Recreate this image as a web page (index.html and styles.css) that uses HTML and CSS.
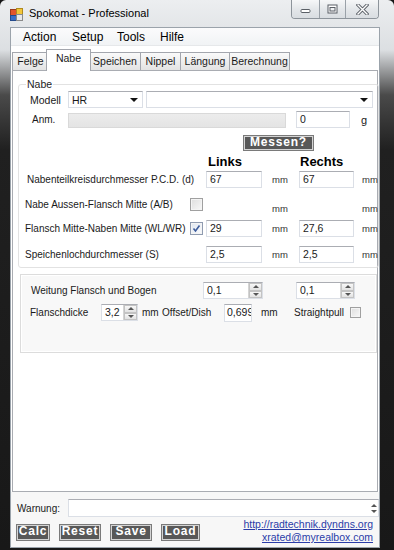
FILE: index.html
```html
<!DOCTYPE html>
<html>
    <head>
        <meta http-equiv="Content-Type" content="text/html; charset=utf-8" />
        <title>Spokomat - Professional</title>
        <link rel="stylesheet" href="styles.css">
    </head>
    <body>
        <div class="window">
            <div class="titlebar">
                <svg class="app_icon" width="13" height="13" viewBox="0 0 13 13">
                    <rect x="0.5" y="1.5" width="6" height="6" fill="#e2552c" stroke="#9b3a1c" stroke-width="1"/>
                    <rect x="6.5" y="0.5" width="6" height="6" fill="#f3c63a" stroke="#b08a1e" stroke-width="1"/>
                    <rect x="0.5" y="7.5" width="6" height="5" fill="#3c6fc6" stroke="#234a8c" stroke-width="1"/>
                    <rect x="6.5" y="6.5" width="6" height="6" fill="#e8e8e8" stroke="#8a8a8a" stroke-width="1"/>
                </svg>
                <span class="title">Spokomat - Professional</span>
                <div class="caption">
                    <span class="cb cb_min">
                        <svg width="11" height="6" viewBox="0 0 11 6"><rect x="1" y="1.5" width="9" height="3" rx="1" fill="#fff" stroke="#5a5f66"/></svg>
                    </span>
                    <span class="cb cb_max">
                        <svg width="11" height="10" viewBox="0 0 11 10"><rect x="1" y="1" width="9" height="8" fill="#fff" stroke="#5a5f66"/><rect x="3" y="3.5" width="5" height="3.5" fill="#eef0f2" stroke="#5a5f66"/></svg>
                    </span>
                    <span class="cb cb_close">
                        <svg width="13" height="11" viewBox="0 0 13 11"><path d="M2 1 L11 10 M11 1 L2 10" stroke="#5a5f66" stroke-width="3.2" stroke-linecap="square"/><path d="M2 1 L11 10 M11 1 L2 10" stroke="#fff" stroke-width="1.4" stroke-linecap="square"/></svg>
                    </span>
                </div>
            </div>

            <div class="client">
                <div class="menubar">
                    <span class="menu_item m_action">Action</span>
                    <span class="menu_item m_setup">Setup</span>
                    <span class="menu_item m_tools">Tools</span>
                    <span class="menu_item">Hilfe</span>
                </div>

                <div class="tabs">
                    <span class="tab t_felge">Felge</span>
                    <span class="tab tab_active t_nabe">Nabe</span>
                    <span class="tab t_speichen">Speichen</span>
                    <span class="tab t_nippel">Nippel</span>
                    <span class="tab t_laengung">Längung</span>
                    <span class="tab t_berechnung">Berechnung</span>
                </div>

                <div class="panel">
                    <fieldset class="group_nabe">
                        <legend>Nabe</legend>

                        <div class="row row_modell">
                            <span class="lbl lbl_modell">Modell</span>
                            <div class="combo combo_short"><span>HR</span><i class="arrow"></i></div>
                            <div class="combo combo_long"><span></span><i class="arrow"></i></div>
                        </div>

                        <div class="row row_anm">
                            <span class="lbl lbl_anm">Anm.</span>
                            <div class="disabled_box"></div>
                            <div class="textbox tb_gewicht">0</div>
                            <span class="unit_g">g</span>
                        </div>

                        <div class="row row_messen">
                            <span class="dark_btn btn_messen">Messen?</span>
                        </div>

                        <div class="grid grid_head">
                            <span></span><span></span>
                            <span class="head head_links">Links</span><span></span>
                            <span class="head head_rechts">Rechts</span><span></span>
                        </div>

                        <div class="grid grid_row1">
                            <span class="glbl glbl_first">Nabenteilkreisdurchmesser P.C.D. (d)</span>
                            <span></span>
                            <div class="textbox">67</div>
                            <span class="mm">mm</span>
                            <div class="textbox">67</div>
                            <span class="mm mm_r">mm</span>
                        </div>

                        <div class="grid grid_row2">
                            <span class="glbl">Nabe Aussen-Flansch Mitte (A/B)</span>
                            <span class="check"></span>
                            <span></span>
                            <span class="mm mm_low">mm</span>
                            <span></span>
                            <span class="mm mm_r mm_low">mm</span>
                        </div>

                        <div class="grid grid_row3">
                            <span class="glbl">Flansch Mitte-Naben Mitte (WL/WR)</span>
                            <span class="check check_on">
                                <svg width="11" height="11" viewBox="0 0 11 11"><path d="M2.5 5.5 L4.5 8 L8.5 2.5" fill="none" stroke="#3d5c9c" stroke-width="1.6"/></svg>
                            </span>
                            <div class="textbox">29</div>
                            <span class="mm">mm</span>
                            <div class="textbox">27,6</div>
                            <span class="mm mm_r">mm</span>
                        </div>

                        <div class="grid grid_row4">
                            <span class="glbl">Speichenlochdurchmesser (S)</span>
                            <span></span>
                            <div class="textbox">2,5</div>
                            <span class="mm">mm</span>
                            <div class="textbox">2,5</div>
                            <span class="mm mm_r">mm</span>
                        </div>
                    </fieldset>

                    <div class="group_weitung">
                        <div class="row row_weitung">
                            <span class="lbl lbl_weitung">Weitung Flansch und Bogen</span>
                            <div class="spin spin_links"><span class="spin_val">0,1</span><span class="spin_btns"><i class="up"></i><i class="down"></i></span></div>
                            <div class="spin spin_rechts"><span class="spin_val">0,1</span><span class="spin_btns"><i class="up"></i><i class="down"></i></span></div>
                        </div>
                        <div class="row row_flansch">
                            <span class="lbl lbl_flansch">Flanschdicke</span>
                            <div class="spin spin_dicke"><span class="spin_val">3,2</span><span class="spin_btns"><i class="up"></i><i class="down"></i></span></div>
                            <span class="lbl lbl_mm1">mm</span>
                            <span class="lbl lbl_offset">Offset/Dish</span>
                            <div class="textbox tb_offset">0,699</div>
                            <span class="lbl lbl_mm2">mm</span>
                            <span class="lbl lbl_straight">Straightpull</span>
                            <span class="check check_small"></span>
                        </div>
                    </div>
                </div>

                <div class="footer">
                    <div class="row row_warnung">
                        <span class="lbl lbl_warnung">Warnung:</span>
                        <div class="textbox tb_warnung">
                            <span class="scroll_arrows"><i class="up"></i><i class="down"></i></span>
                        </div>
                    </div>
                    <div class="row row_buttons">
                        <span class="dark_btn btn_calc">Calc</span>
                        <span class="dark_btn btn_reset">Reset</span>
                        <span class="dark_btn btn_save">Save</span>
                        <span class="dark_btn btn_load">Load</span>
                        <div class="links">
                            <a href="#">http://radtechnik.dyndns.org</a>
                            <a href="#">xrated@myrealbox.com</a>
                        </div>
                    </div>
                </div>
            </div>
        </div>
    </body>
</html>
```

FILE: styles.css
```css
* {
    box-sizing: border-box;
}
body {
    margin: 0;
    width: 394px;
    height: 550px;
    overflow: hidden;
    background: #151515;
    font-family: "Liberation Sans", Arial, sans-serif;
    font-size: 10px;
    color: #1a1a1a;
}

/* window frame */
.window {
    height: 550px;
    display: flex;
    flex-direction: column;
    padding: 0 14px 2px 10px;
    border-radius: 6px 6px 0 0;
    background: linear-gradient(to bottom, #eceef0 0, #dcdfe2 50px, #4a4a4a 95px, #202020 150px, #181818 100%);
}
.titlebar {
    height: 27px;
    display: flex;
    align-items: flex-start;
}
.app_icon {
    margin-top: 8px;
}
.title {
    margin: 6px 0 0 6px;
    font-size: 11px;
    line-height: 14px;
    color: #000;
}
.caption {
    margin-left: auto;
    margin-right: 1px;
    display: flex;
    height: 19px;
    border: 1px solid #8d949b;
    border-top: none;
    border-radius: 0 0 4px 4px;
    overflow: hidden;
}
.cb {
    height: 18px;
    display: flex;
    align-items: center;
    justify-content: center;
    background: linear-gradient(#f6f7f8, #e4e7ea 50%, #d9dde1);
    border-left: 1px solid #9aa1a8;
}
.cb_min {
    width: 27px;
    border-left: none;
    padding-top: 4px;
}
.cb_max {
    width: 26px;
}
.cb_close {
    width: 33px;
}

/* client area */
.client {
    flex: 1;
    display: flex;
    flex-direction: column;
    background: #fff;
    border: 1px solid #9ba3ab;
}
.menubar {
    height: 18px;
    display: flex;
    align-items: center;
    padding-left: 12px;
    font-size: 12px;
    color: #000;
    background: linear-gradient(#fbfbfc, #f1f3f5);
    border-bottom: 1px solid #e6e8ea;
}
.menu_item {
    display: inline-block;
}
.m_action { width: 49px; }
.m_setup { width: 45px; }
.m_tools { width: 43px; }

/* tabs */
.tabs {
    height: 24px;
    display: flex;
    align-items: flex-end;
    padding-left: 1px;
    font-size: 10.5px;
}
.tab {
    height: 18px;
    line-height: 17px;
    text-align: center;
    border: 1px solid #a3a6ad;
    border-bottom: none;
    margin-right: -1px;
    background: linear-gradient(#fafafa, #eeeeee 50%, #e3e3e3);
}
.tab_active {
    position: relative;
    z-index: 1;
    height: 22px;
    line-height: 17px;
    margin: 0 -2px -1px -2px;
    background: #fff;
}
.t_felge { width: 37px; }
.t_nabe { width: 45px; }
.t_speichen { width: 52px; }
.t_nippel { width: 41px; }
.t_laengung { width: 50px; }
.t_berechnung { width: 61px; }

.panel {
    margin-left: 1px;
    width: 366px;
    height: 422px;
    border: 1px solid #a9acb2;
    background: #fff;
}

/* group Nabe */
.group_nabe {
    margin: 7px 0 0 5px;
    width: 357px;
    padding: 0 0 4px 0;
    border: 1px solid #e2e2e2;
    border-radius: 3px;
}
.group_nabe legend {
    margin-left: 7px;
    padding: 0 1px;
    line-height: 13px;
    font-size: 10.5px;
    color: #222;
}
.row {
    display: flex;
    align-items: center;
    height: 17px;
}
.lbl {
    white-space: nowrap;
}
.lbl_modell {
    width: 49px;
    padding-left: 11px;
    font-size: 10.5px;
}
.lbl_anm {
    width: 49px;
    padding-left: 13px;
}
.row_anm {
    margin-top: 3px;
}
.row_messen {
    margin-top: 7px;
    height: 16px;
}

/* inputs */
.textbox {
    height: 17px;
    line-height: 15px;
    padding-left: 3px;
    font-size: 10.5px;
    background: #fff;
    border: 1px solid #dbdfe6;
    border-top-color: #abadb3;
    white-space: nowrap;
    overflow: hidden;
}
.combo {
    height: 17px;
    display: flex;
    align-items: center;
    justify-content: space-between;
    padding: 0 4px 0 3px;
    font-size: 10.5px;
    background: #fff;
    border: 1px solid #dbdfe6;
    border-top-color: #abadb3;
}
.combo_short {
    width: 75px;
}
.combo_long {
    width: 227px;
    margin-left: 3px;
}
.arrow {
    width: 0;
    height: 0;
    border-left: 4px solid transparent;
    border-right: 4px solid transparent;
    border-top: 4px solid #111;
}
.disabled_box {
    width: 218px;
    height: 15px;
    margin-top: 2px;
    background: linear-gradient(#ececec, #e4e4e4);
    border: 1px solid #d9d9d9;
}
.tb_gewicht {
    width: 54px;
    margin-left: 10px;
}
.unit_g {
    margin-left: 11px;
    font-size: 11px;
}

.dark_btn {
    display: inline-block;
    height: 16px;
    line-height: 13px;
    text-align: center;
    color: #fff;
    font-weight: bold;
    font-size: 12px;
    letter-spacing: 0.8px;
    background: #585858;
    border: 1px solid #7a7a7a;
    box-shadow: inset 0 0 0 1px #d4d4d4;
}
.btn_messen {
    margin-left: 224px;
    width: 71px;
}

/* measurement grid */
.grid {
    display: grid;
    grid-template-columns: 171px 16px 56px 37px 55px auto;
    align-items: center;
    height: 17px;
}
.grid_head {
    margin-top: 3px;
    height: 14px;
}
.head {
    font-weight: bold;
    font-size: 13px;
    color: #000;
}
.head_links {
    padding-left: 2px;
}
.head_rechts {
    padding-left: 1px;
}
.grid_row1 {
    margin-top: 3px;
}
.grid_row2 {
    margin-top: 7px;
}
.grid_row3 {
    margin-top: 8px;
}
.grid_row4 {
    margin-top: 9px;
}
.glbl {
    padding-left: 6px;
    white-space: nowrap;
}
.glbl_first {
    padding-left: 8px;
}
.mm {
    padding-left: 10px;
    font-size: 9.5px;
    color: #333;
}
.mm_r {
    padding-left: 8px;
}
.mm_low {
    padding-top: 8px;
}
.check {
    width: 13px;
    height: 13px;
    display: flex;
    align-items: center;
    justify-content: center;
    border: 1px solid #a0a0a0;
    background: linear-gradient(135deg, #dedede, #f8f8f8);
    box-shadow: inset 0 0 0 1px #f4f4f4;
}
.check_on {
    border-color: #8f9bb0;
    background: linear-gradient(135deg, #dfe6f0, #fafbfd);
}

/* group Weitung */
.group_weitung {
    margin: 6px 0 0 7px;
    width: 357px;
    height: 79px;
    padding: 7px 0 0 0;
    border: 1px solid #dcdcdc;
    background: #f8f8f8;
    box-shadow: inset 0 0 0 1px #fff;
}
.lbl_weitung {
    width: 182px;
    padding-left: 10px;
}
.spin {
    height: 17px;
    display: flex;
    font-size: 10.5px;
    background: #fff;
    border: 1px solid #dbdfe6;
    border-top-color: #abadb3;
}
.spin_val {
    flex: 1;
    padding-left: 3px;
    line-height: 15px;
}
.spin_btns {
    width: 14px;
    display: flex;
    flex-direction: column;
    border-left: 1px solid #d4d4d4;
}
.spin_btns i,
.scroll_arrows i {
    flex: 1;
    display: flex;
    align-items: center;
    justify-content: center;
}
.spin_btns i {
    background: linear-gradient(#f7f7f7, #e2e2e2);
    border: 1px solid #c3c3c3;
}
.up::before,
.down::before {
    content: "";
    border-left: 3px solid transparent;
    border-right: 3px solid transparent;
}
.up::before {
    border-bottom: 3px solid #555;
}
.down::before {
    border-top: 3px solid #555;
}
.spin_links {
    width: 60px;
}
.spin_rechts {
    width: 59px;
    margin-left: 33px;
}
.row_flansch {
    margin-top: 5px;
}
.lbl_flansch {
    width: 80px;
    padding-left: 9px;
}
.spin_dicke {
    width: 37px;
}
.lbl_mm1 {
    width: 24px;
    padding-left: 4px;
}
.lbl_offset {
    width: 62px;
}
.tb_offset {
    width: 28px;
    height: 18px;
    padding-left: 2px;
}
.lbl_mm2 {
    width: 42px;
    padding-left: 9px;
}
.lbl_straight {
    width: 56px;
}
.check_small {
    width: 11px;
    height: 11px;
}

/* footer */
.footer {
    flex: 1;
    padding: 7px 0 0 0;
    background: #f7f7f7;
}
.row_warnung {
    height: 18px;
}
.lbl_warnung {
    width: 57px;
    padding-left: 6px;
}
.tb_warnung {
    flex: 1;
    height: 18px;
    display: flex;
    justify-content: flex-end;
    padding: 0;
}
.scroll_arrows {
    width: 8px;
    display: flex;
    flex-direction: column;
    padding: 2px 0;
}
.row_buttons {
    margin-top: 7px;
    padding-left: 5px;
}
.btn_calc {
    width: 34px;
    height: 17px;
}
.btn_reset {
    width: 42px;
    height: 17px;
    margin-left: 9px;
}
.btn_save {
    width: 42px;
    height: 17px;
    margin-left: 9px;
}
.btn_load {
    width: 39px;
    height: 17px;
    margin-left: 9px;
}
.links {
    margin-left: auto;
    padding-right: 6px;
    margin-top: -3px;
    display: flex;
    flex-direction: column;
    align-items: flex-end;
    line-height: 13px;
    font-size: 10.5px;
}
.links a {
    color: #2a3ca8;
}
```
